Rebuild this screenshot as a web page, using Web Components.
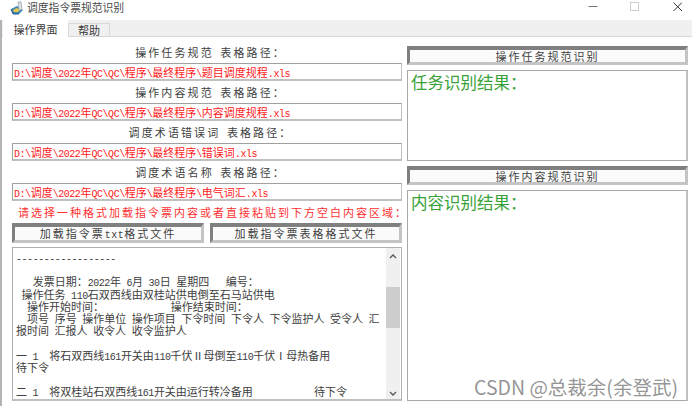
<!DOCTYPE html>
<html>
<head>
<meta charset="utf-8">
<title>调度指令票规范识别</title>
<style>
  html, body { margin: 0; padding: 0; background: #fff; }
  body { font-family: "Noto Sans CJK SC", sans-serif; }
</style>
</head>
<body>
<app-window>
  <title-bar slot="title">调度指令票规范识别</title-bar>
  <tab-strip slot="tabs"></tab-strip>

  <main-panel slot="panel">
    <path-field slot="left" label="操作任务规范 表格路径：" path="D:\调度\2022年QC\QC\程序\最终程序\题目调度规程.xls"></path-field>
    <path-field slot="left" label="操作内容规范 表格路径：" path="D:\调度\2022年QC\QC\程序\最终程序\内容调度规程.xls"></path-field>
    <path-field slot="left" label="调度术语错误词 表格路径：" path="D:\调度\2022年QC\QC\程序\最终程序\错误词.xls"></path-field>
    <path-field slot="left" label="调度术语名称 表格路径：" path="D:\调度\2022年QC\QC\程序\最终程序\电气词汇.xls"></path-field>
    <hint-line slot="left">请选择一种格式加载指令票内容或者直接粘贴到下方空白内容区域：</hint-line>
    <button-row slot="left">
      <bevel-button label="加载指令票txt格式文件"></bevel-button>
      <bevel-button label="加载指令票表格格式文件"></bevel-button>
    </button-row>
    <memo-box slot="left">
      <mix-text text="------------------"></mix-text>
      <mix-text text=""></mix-text>
      <mix-text text="   发票日期：2022年 6月 30日 星期四   编号："></mix-text>
      <mix-text text=" 操作任务 110石双西线由双桂站供电倒至石马站供电"></mix-text>
      <mix-text text="  操作开始时间：            操作结束时间："></mix-text>
      <mix-text text="  项号 序号 操作单位 操作项目 下令时间 下令人 下令监护人 受令人 汇"></mix-text>
      <mix-text text="报时间 汇报人 收令人 收令监护人"></mix-text>
      <mix-text text=""></mix-text>
      <mix-text text="一 1  将石双西线161开关由110千伏Ⅱ母倒至110千伏Ⅰ母热备用"></mix-text>
      <mix-text text="待下令"></mix-text>
      <mix-text text=""></mix-text>
      <mix-text text="二 1  将双桂站石双西线161开关由运行转冷备用           待下令"></mix-text>
    </memo-box>

    <bevel-button slot="right" label="操作任务规范识别" style="flex:0 0 19px"></bevel-button>
    <result-box slot="right" style="flex:0 0 91px">任务识别结果：</result-box>
    <bevel-button slot="right" label="操作内容规范识别" style="flex:0 0 19px"></bevel-button>
    <result-box slot="right" style="flex:1">内容识别结果：</result-box>
  </main-panel>

  <water-mark slot="overlay">CSDN @总裁余(余登武)</water-mark>
</app-window>

<script>
// half width latin + full width cjk, like the SimSun text of the original
class MixText extends HTMLElement {
  constructor() {
    super();
    this.attachShadow({ mode: 'open' });
  }

  connectedCallback() {
    const text = this.getAttribute('text') || '';
    const parts = text.match(/[\x00-\xff]+|[^\x00-\xff]+/g) || [];
    this.shadowRoot.innerHTML = `<style>
        :host { display: block; white-space: nowrap; }
        span { white-space: pre; }
        .l {
          font-family: "Liberation Mono", monospace;
          font-size: 0.91em;
          letter-spacing: calc(var(--mix-ls, 0px) * 0.5 - 0.45px);
        }
        .c {
          font-family: "Noto Sans CJK SC", sans-serif;
          letter-spacing: var(--mix-ls, 0px);
        }
      </style>`;
    parts.forEach(p => {
      const span = document.createElement('span');
      span.className = /^[\x00-\xff]/.test(p) ? 'l' : 'c';
      span.textContent = p;
      this.shadowRoot.appendChild(span);
    });
  }
}

class AppWindow extends HTMLElement {
  constructor() {
    super();
    this.attachShadow({ mode: 'open' }).innerHTML = `
      <style>
        :host {
          display: flex;
          flex-direction: column;
          position: relative;
          width: 692px;
          height: 406px;
          overflow: hidden;
          background: #fff;
        }
        .body {
          flex: 1;
          display: flex;
          flex-direction: column;
          min-height: 0;
          border-left: 2px solid #b4b4b4;
        }
      </style>
      <slot name="title"></slot>
      <div class="body">
        <slot name="tabs"></slot>
        <slot name="panel"></slot>
      </div>
      <slot name="overlay"></slot>
    `;
  }
}

class TitleBar extends HTMLElement {
  constructor() {
    super();
    this.attachShadow({ mode: 'open' }).innerHTML = `
      <style>
        :host {
          display: flex;
          align-items: center;
          height: 20px;
          padding-left: 10px;
          font-size: 10.8px;
          color: #4a4a4a;
          background: #fff;
        }
        .icon { width: 14px; height: 14px; margin-right: 3px; margin-top: -4px; flex: none; }
        .name { flex: 1; margin-top: -6px; }
        .ctl { flex: none; display: block; margin-top: -6px; margin-right: 10px; }
      </style>
      <svg class="icon" viewBox="0 0 14 14">
        <path d="M1 8 L7 5 L13 9 L9 13 L3 13 Z" fill="#3f86b8"/>
        <path d="M3 9 L7 7 L10 9 L8 11 L4 11 Z" fill="#e8c84a"/>
        <path d="M8 1 L11 1 L12 9 L9 9 Z" fill="#dfe6ea" stroke="#7d8b94" stroke-width=".6"/>
        <path d="M1 8 L3 13 L9 13" fill="none" stroke="#2c5f85" stroke-width="1"/>
      </svg>
      <span class="name"><slot></slot></span>
      <svg class="ctl" width="110" height="12" viewBox="0 0 110 12">
        <path d="M16.5 5.5 H25.5" stroke="#777" stroke-width="1"/>
        <rect x="58.5" y="1.5" width="8" height="8" fill="none" stroke="#cfcfcf"/>
        <path d="M101.5 1.5 L110 10 M110 1.5 L101.5 10" stroke="#333" stroke-width="1"/>
      </svg>
    `;
  }
}

class TabStrip extends HTMLElement {
  constructor() {
    super();
    this.attachShadow({ mode: 'open' }).innerHTML = `
      <style>
        :host {
          display: flex;
          align-items: flex-end;
          height: 17px;
          box-sizing: border-box;
          padding-left: 1px;
          background: #f0f0f0;
          border-bottom: 1px solid #d9d9d9;
          font-size: 11px;
          color: #3c3c3c;
        }
        .tab { box-sizing: border-box; display: flex; align-items: center; justify-content: center; }
        .on { width: 65px; height: 17px; margin-bottom: -1px; background: #fff; }
        .off {
          width: 42px;
          height: 13px;
          border: 1px solid #d9d9d9;
          border-bottom: none;
          background: #f0f0f0;
        }
      </style>
      <div class="tab on">操作界面</div>
      <div class="tab off">帮助</div>
    `;
  }
}

class MainPanel extends HTMLElement {
  constructor() {
    super();
    this.attachShadow({ mode: 'open' }).innerHTML = `
      <style>
        :host {
          flex: 1;
          min-height: 0;
          display: grid;
          grid-template-columns: 390px 281px;
          column-gap: 5px;
          padding: 4px 0 5px 10px;
          background: #fff;
        }
        .col { display: flex; flex-direction: column; min-height: 0; }
        .right { padding-top: 5px; gap: 5px; }
      </style>
      <div class="col"><slot name="left"></slot></div>
      <div class="col right"><slot name="right"></slot></div>
    `;
  }
}

class PathField extends HTMLElement {
  constructor() {
    super();
    this.attachShadow({ mode: 'open' });
  }

  connectedCallback() {
    const label = this.getAttribute('label') || '';
    const path = this.getAttribute('path') || '';
    this.shadowRoot.innerHTML = `
      <style>
        :host { display: block; flex: none; font-size: 11px; }
        .label {
          height: 22px;
          display: flex;
          align-items: center;
          justify-content: center;
          padding-left: 7px;
          color: #404040;
          --mix-ls: 2.1px;
        }
        .input {
          box-sizing: border-box;
          height: 18px;
          display: flex;
          align-items: center;
          padding-left: 1px;
          border: 1px solid #a0a0a0;
          border-right-color: #c0c0c0;
          border-bottom: 2px solid #c0c0c0;
          color: #ff2020;
        }
      </style>
      <div class="label"><mix-text id="l"></mix-text></div>
      <div class="input"><mix-text id="p"></mix-text></div>
    `;
    this.shadowRoot.getElementById('l').setAttribute('text', label);
    this.shadowRoot.getElementById('p').setAttribute('text', path);
    this.shadowRoot.querySelectorAll('mix-text').forEach(m => m.connectedCallback());
  }
}

class HintLine extends HTMLElement {
  constructor() {
    super();
    this.attachShadow({ mode: 'open' }).innerHTML = `
      <style>
        :host {
          display: flex;
          flex: none;
          align-items: center;
          height: 22px;
          padding-left: 6px;
          font-size: 11px;
          letter-spacing: 2px;
          white-space: nowrap;
          color: #ff3030;
        }
      </style>
      <slot></slot>
    `;
  }
}

class ButtonRow extends HTMLElement {
  constructor() {
    super();
    this.attachShadow({ mode: 'open' }).innerHTML = `
      <style>
        :host {
          display: flex;
          flex: none;
          gap: 6px;
          height: 20px;
          margin-bottom: 4px;
        }
        ::slotted(bevel-button) { flex: 0 0 192px; height: 20px; }
      </style>
      <slot></slot>
    `;
  }
}

class BevelButton extends HTMLElement {
  constructor() {
    super();
    this.attachShadow({ mode: 'open' });
  }

  connectedCallback() {
    const label = this.getAttribute('label') || '';
    this.shadowRoot.innerHTML = `
      <style>
        :host {
          display: block;
          box-sizing: border-box;
          border-style: solid;
          border-width: 4px 3px 3px 3px;
          border-color: #808080 #c4c4c4 #c4c4c4 #808080;
          background: #fbfbfb;
          font-size: 11px;
          line-height: 12px;
          color: #404040;
          --mix-ls: 2px;
          overflow: hidden;
        }
        .in { display: flex; justify-content: center; height: 12px; }
      </style>
      <div class="in"><mix-text id="t"></mix-text></div>
    `;
    const t = this.shadowRoot.getElementById('t');
    t.setAttribute('text', label);
    t.connectedCallback();
  }
}

class ResultBox extends HTMLElement {
  constructor() {
    super();
    this.attachShadow({ mode: 'open' }).innerHTML = `
      <style>
        :host {
          display: block;
          box-sizing: border-box;
          min-height: 0;
          padding: 0 0 0 3px;
          border: 1px solid #a8a8a8;
          border-right: 2px solid #c0c0c0;
          border-bottom: 1px solid #a8a8a8;
          font-size: 16.5px;
          line-height: 22px;
          color: #38a238;
        }
      </style>
      <slot></slot>
    `;
  }
}

class MemoBox extends HTMLElement {
  constructor() {
    super();
    this.attachShadow({ mode: 'open' }).innerHTML = `
      <style>
        :host {
          display: flex;
          flex: 1;
          min-height: 0;
          box-sizing: border-box;
          border: 1px solid #b0b0b0;
          border-bottom: 2px solid #c0c0c0;
          font-size: 11px;
          color: #404040;
        }
        .text {
          flex: 1;
          min-width: 0;
          overflow: hidden;
          padding: 3px 0 0 3px;
          display: flex;
          flex-direction: column;
        }
        ::slotted(mix-text) { height: 12.2px; line-height: 12.2px; flex: none; }
        .bar {
          width: 14px;
          flex: none;
          display: flex;
          flex-direction: column;
          background: #f0f0f0;
          margin-right: 1px;
        }
        .arrow {
          box-sizing: border-box;
          height: 16px;
          flex: none;
          display: flex;
          align-items: center;
          justify-content: center;
        }
        .track { flex: 1; padding-top: 23px; }
        .thumb { height: 41px; background: #cdcdcd; }
      </style>
      <div class="text"><slot></slot></div>
      <div class="bar">
        <div class="arrow"><svg width="8" height="5" viewBox="0 0 8 5"><path d="M1 4 L4 1 L7 4" fill="none" stroke="#555" stroke-width="1.3"/></svg></div>
        <div class="track"><div class="thumb"></div></div>
        <div class="arrow" style="padding-top:4px"><svg width="8" height="5" viewBox="0 0 8 5"><path d="M1 1 L4 4 L7 1" fill="none" stroke="#555" stroke-width="1.3"/></svg></div>
      </div>
    `;
  }
}

class WaterMark extends HTMLElement {
  constructor() {
    super();
    this.attachShadow({ mode: 'open' }).innerHTML = `
      <style>
        :host {
          position: absolute;
          left: 474px;
          top: 375px;
          font-family: "Noto Sans CJK SC", sans-serif;
          font-size: 19.5px;
          line-height: 24px;
          color: rgba(120, 120, 120, 0.8);
          white-space: nowrap;
        }
      </style>
      <slot></slot>
    `;
  }
}

customElements.define('mix-text', MixText);
customElements.define('app-window', AppWindow);
customElements.define('title-bar', TitleBar);
customElements.define('tab-strip', TabStrip);
customElements.define('main-panel', MainPanel);
customElements.define('path-field', PathField);
customElements.define('hint-line', HintLine);
customElements.define('button-row', ButtonRow);
customElements.define('bevel-button', BevelButton);
customElements.define('result-box', ResultBox);
customElements.define('memo-box', MemoBox);
customElements.define('water-mark', WaterMark);
</script>
</body>
</html>
